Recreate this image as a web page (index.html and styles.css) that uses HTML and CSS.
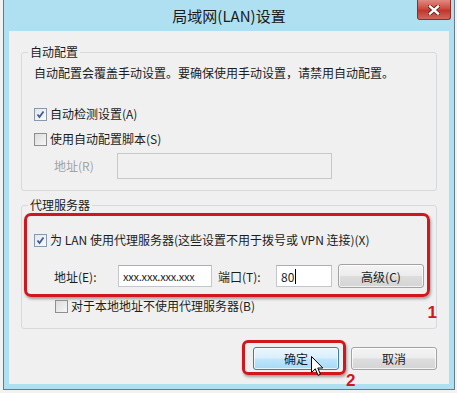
FILE: index.html
```html
<!DOCTYPE html>
<html lang="zh-CN">
<head>
<meta charset="utf-8">
<title>局域网(LAN)设置</title>
<link rel="stylesheet" href="styles.css">
</head>
<body>
<div class="window">
  <div class="titlebar">
    <span></span>
    <div class="title">局域网(LAN)设置</div>
    <div class="close">
      <svg width="12" height="10" viewBox="0 0 12 10"><path d="M2 1.5 L10 8.5 M10 1.5 L2 8.5" stroke="#5a1d18" stroke-width="4" stroke-linecap="square"/><path d="M2 1.5 L10 8.5 M10 1.5 L2 8.5" stroke="#fff" stroke-width="2.4" stroke-linecap="square"/></svg>
    </div>
  </div>
  <div class="client">
    <fieldset class="group g1">
      <legend>自动配置</legend>
      <p class="desc">自动配置会覆盖手动设置。要确保使用手动设置，请禁用自动配置。</p>
      <label class="check ca"><span class="cb on"><svg width="11" height="11" viewBox="0 0 11 11"><path d="M2.5 5.5 L4.5 8 L8.5 2.5" fill="none" stroke="#3f5c99" stroke-width="1.8"/></svg></span>自动检测设置(A)</label>
      <label class="check cbx"><span class="cb"></span>使用自动配置脚本(S)</label>
      <div class="addr-row">
        <span class="lbl-r">地址(R)</span>
        <span class="input dis"></span>
      </div>
    </fieldset>
    <fieldset class="group g2">
      <legend>代理服务器</legend>
      <div class="hl">
        <label class="check"><span class="cb on"><svg width="11" height="11" viewBox="0 0 11 11"><path d="M2.5 5.5 L4.5 8 L8.5 2.5" fill="none" stroke="#3f5c99" stroke-width="1.8"/></svg></span>为 LAN 使用代理服务器(这些设置不用于拨号或 VPN 连接)(X)</label>
        <div class="proxy-row">
          <span class="lbl-e">地址(E):</span>
          <span class="input addr">xxx.xxx.xxx.xxx</span>
          <span class="lbl-t">端口(T):</span>
          <span class="input port">80<span class="caret"></span></span>
          <span class="btn adv">高级(C)</span>
        </div>
      </div>
      <label class="check bypass"><span class="cb"></span>对于本地地址不使用代理服务器(B)<span class="mark m1">1</span></label>
    </fieldset>
    <div class="actions">
      <div class="hl2">
        <span class="btn def">确定</span>
        <svg class="cursor" width="13" height="21" viewBox="0 0 13 21"><path d="M0.5 0.5 L0.5 16.5 L4.3 12.8 L7 19.3 L9.4 18.3 L6.8 12 L11.8 12 Z" fill="#fff" stroke="#000" stroke-width="1" stroke-linejoin="miter"/></svg>
        <span class="mark m2">2</span>
      </div>
      <span class="btn cancel">取消</span>
    </div>
  </div>
</div>
</body>
</html>
```

FILE: styles.css
```css
body {
  margin: 0;
  background: #f2f2f2;
  font-family: "Noto Sans CJK SC", sans-serif;
  font-size: 12px;
  color: #1c1c1c;
}

.window {
  margin-left: 3px;
  width: 452px;
  height: 390px;
  box-sizing: border-box;
  border: 1px solid #6c7a82;
  border-top: 0;
  background: #afe0f1;
  padding: 0 5px 5px;
  display: flex;
  flex-direction: column;
}

.titlebar {
  height: 31px;
  display: grid;
  grid-template-columns: 1fr auto 1fr;
  align-items: start;
}

.title {
  font-size: 15px;
  line-height: 31px;
  color: #1a1a1a;
}

.close {
  justify-self: end;
  width: 34px;
  height: 20px;
  margin-right: -2px;
  box-sizing: border-box;
  border: 1px solid #8e2e26;
  border-top: 0;
  border-radius: 0 0 3px 3px;
  background: linear-gradient(#e08a80, #cf4b40 45%, #c0362b 55%, #d2675c);
  display: flex;
  align-items: center;
  justify-content: center;
}

.client {
  flex: 1;
  background: #f0f0f0;
  padding: 13px 12px 0;
  display: flex;
  flex-direction: column;
}

.group {
  margin: 0;
  border: 1px solid #d6dadd;
  border-radius: 3px;
  padding: 0 12px 11px;
  min-width: 0;
}

.group legend {
  font-size: 12px;
  line-height: 16px;
  padding: 0 2px;
  margin-left: -6px;
}

.desc {
  margin: 5px 0 0;
  line-height: 16px;
}

.check {
  display: flex;
  align-items: center;
  height: 16px;
  line-height: 16px;
  white-space: nowrap;
}

.cb {
  width: 13px;
  height: 13px;
  box-sizing: border-box;
  border: 1px solid #8f8f8f;
  background: linear-gradient(135deg, #dcdcdc, #f6f6f6);
  margin-right: 3px;
  display: flex;
  align-items: center;
  justify-content: center;
  flex: none;
}

.cb.on {
  border-color: #8a98aa;
  background: linear-gradient(135deg, #e2e6ec, #fbfbfc);
}

.ca { margin-top: 25px; }
.cbx { margin-top: 9px; }

.addr-row {
  display: flex;
  align-items: center;
  margin-top: 6px;
  padding-left: 20px;
}

.lbl-r {
  width: 63px;
  color: #a3a3a3;
  padding-bottom: 2px;
}

.input {
  box-sizing: border-box;
  border: 1px solid #c3c6ca;
  border-top-color: #abadb3;
  background: #fff;
  display: flex;
  align-items: center;
}

.input.dis {
  width: 215px;
  height: 26px;
  background: #f0f0f0;
  border-color: #c8c8c8;
}

.g2 {
  margin-top: 6px;
  padding-bottom: 14px;
}

.hl {
  margin: 0 -6px 0 -10px;
  border: 3px solid #d0171d;
  border-radius: 7px;
  padding: 16px 3px 6px 7px;
  box-shadow: 1px 2px 3px rgba(0, 0, 0, 0.35);
}

.proxy-row {
  display: flex;
  align-items: center;
  height: 24px;
  margin-top: 16px;
}

.lbl-e {
  margin-left: 20px;
  width: 64px;
}

.input.addr {
  width: 94px;
  height: 22px;
  padding-left: 4px;
  font-size: 11px;
  letter-spacing: -0.2px;
}

.lbl-t {
  margin-left: 6px;
  width: 58px;
}

.input.port {
  width: 56px;
  height: 22px;
  padding-left: 4px;
  font-size: 12px;
}

.caret {
  width: 0;
  height: 15px;
  border-left: 1px solid #000;
  margin-left: 1px;
}

.btn {
  box-sizing: border-box;
  width: 86px;
  height: 23px;
  border: 1px solid #a3a3a3;
  border-radius: 3px;
  background: linear-gradient(#f4f4f4, #ececec 48%, #dddddd 52%, #d4d4d4);
  box-shadow: inset 0 0 0 1px rgba(255, 255, 255, 0.7);
  display: flex;
  align-items: center;
  justify-content: center;
  font-size: 12px;
}

.btn.adv {
  margin-left: 6px;
  height: 24px;
}

.bypass {
  margin-top: 1px;
  padding-left: 21px;
  position: relative;
}

.mark {
  font-family: "Liberation Sans", sans-serif;
  font-weight: bold;
  font-size: 17px;
  line-height: 16px;
  color: #d3161c;
}

.m1 {
  position: absolute;
  right: -13px;
  top: 7px;
}

.actions {
  display: flex;
  justify-content: flex-end;
  margin-top: 18px;
}

.hl2 {
  position: relative;
  margin: -7px -8px -5px -11px;
  border: 3px solid #d0171d;
  border-radius: 6px;
  padding: 4px 4px 2px 8px;
  box-shadow: 1px 2px 3px rgba(0, 0, 0, 0.35);
}

.btn.def {
  border-color: #3c7db0;
  background: linear-gradient(#eaf6fd, #d9effc 48%, #bee6fd 52%, #a8d9f4);
}

.cursor {
  position: absolute;
  left: 66px;
  top: 13px;
}

.m2 {
  position: absolute;
  left: 101px;
  top: 30px;
}

.btn.cancel {
  margin-left: 13px;
}
```
